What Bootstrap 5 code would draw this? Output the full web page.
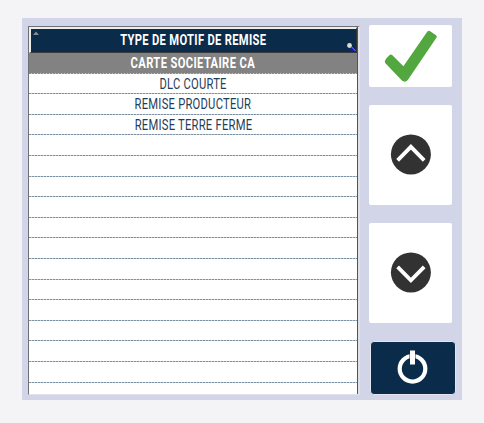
<!DOCTYPE html>
<html lang="fr">
<head>
<meta charset="utf-8">
<meta name="viewport" content="width=device-width, initial-scale=1">
<title>Type de motif de remise</title>
<link href="https://cdn.jsdelivr.net/npm/bootstrap@5.3.0/dist/css/bootstrap.min.css" rel="stylesheet">
<style>
body{background:#f4f4f6;font-family:Roboto,"Liberation Sans",sans-serif;font-size:14px;color:#1f3d59;height:423px;padding:18px 22px;overflow:hidden}
.panel{width:440px;height:382px;background:#d2d5e8;padding:8px 7px 5px 6px}
.motifs{width:332px;height:369px;background:#fff;border:1px solid #6f7073;border-right:2px solid #dfe1e6;border-bottom:1px solid #e1e2ea;margin-right:9px}
.grid-inner{height:100%;border-right:1px solid #3c5970}
.head{height:26px;background:#0a2c4a;color:#fff;border-top:2px solid #ededeb;border-left:2px solid #ededeb;border-bottom:1px solid #3b3b3b;border-right:1px solid #333}
.line{height:20.6px;background:repeating-linear-gradient(90deg,#7d93a5 0 2px,#bcc7d0 2px 3px) left bottom/100% 1px no-repeat;line-height:20px}
.line.chosen{background-color:#828282;color:#fff}
.narrow{display:inline-block;transform:scaleX(.8);white-space:nowrap;letter-spacing:.3px}
.fw-bold .narrow{letter-spacing:.38px}
.chosen .narrow{letter-spacing:.45px}
.sorter{left:1px;top:2px}
.finder{right:0;bottom:0}
.key{width:83px;background:#fff;border:0;border-radius:2px;padding:0}
.key-ok{height:62px;margin-bottom:18px;margin-top:-1px}
.key-move{height:100px;margin-bottom:18px}
.key-power{width:86px;height:54px;margin-left:1px;background:#0a2c4a;border:1px solid #e4e5ee;border-radius:4px}
</style>
<script src="https://cdn.jsdelivr.net/npm/bootstrap@5.3.0/dist/js/bootstrap.bundle.min.js"></script>
</head>
<body>
<main class="panel d-flex">
  <section class="motifs flex-shrink-0">
    <div class="grid-inner overflow-hidden text-center">
      <div class="head position-relative d-flex align-items-center justify-content-center fw-bold">
        <svg class="sorter position-absolute" width="8" height="5" viewBox="0 0 8 5"><path d="M1 4L4 .5L7 4Z" fill="#8a8a8a"/><path d="M0 4.5H7.5" stroke="#222"/></svg>
        <span class="narrow">TYPE DE MOTIF DE REMISE</span>
        <svg class="finder position-absolute" width="10" height="10" viewBox="0 0 10 10"><path d="M4.5 5L9 9.5" stroke="#1a12f0" stroke-width="1.8"/><path d="M5.3 4.6L9.5 8.8" stroke="#b9b9ee" stroke-width=".7"/><circle cx="3.5" cy="3.5" r="2.4" fill="#deded8"/></svg>
      </div>
      <div class="line chosen fw-bold"><span class="narrow">CARTE SOCIETAIRE CA</span></div>
      <div class="line"><span class="narrow">DLC COURTE</span></div>
      <div class="line"><span class="narrow">REMISE PRODUCTEUR</span></div>
      <div class="line"><span class="narrow">REMISE TERRE FERME</span></div>
      <div class="line"></div><div class="line"></div><div class="line"></div><div class="line"></div>
      <div class="line"></div><div class="line"></div><div class="line"></div><div class="line"></div>
      <div class="line"></div><div class="line"></div><div class="line"></div><div class="line"></div>
    </div>
  </section>
  <nav class="d-flex flex-column align-items-start">
    <button class="key key-ok d-flex" type="button" aria-label="Valider"><svg width="83" height="62" viewBox="0 0 83 62"><path d="M17.4 33.2L20.6 30.1Q22 29 23.4 30.2L34.4 41.2L58.4 6.6Q59.6 5.2 61.2 6.2L67 10.2Q68.4 11.4 67.4 12.8L38.8 55Q36 58 32.9 55.6L16.4 38.2Q15 36.6 16.4 35.1Z" fill="#53a73f"/></svg></button>
    <button class="key key-move d-flex" type="button" aria-label="Monter"><svg width="83" height="100" viewBox="0 0 83 100"><circle cx="41.9" cy="49.4" r="20" fill="#323232"/><path d="M28.6 55.4L41.9 41.8L55.2 55.4" fill="none" stroke="#fff" stroke-width="3.8"/></svg></button>
    <button class="key key-move d-flex" type="button" aria-label="Descendre"><svg width="83" height="100" viewBox="0 0 83 100"><circle cx="41.9" cy="49.4" r="20" fill="#323232"/><path d="M28.6 43.9L41.9 57.3L55.2 43.9" fill="none" stroke="#fff" stroke-width="3.8"/></svg></button>
    <button class="key key-power d-flex" type="button" aria-label="Quitter"><svg width="84" height="52" viewBox="0 0 84 52"><circle cx="41.5" cy="26.8" r="12.8" fill="none" stroke="#fff" stroke-width="4.2"/><path d="M38.8 11V22M44.2 11V22" stroke="#0a2c4a" stroke-width=".7"/><path d="M41.5 8.5V22.5" stroke="#fff" stroke-width="5"/></svg></button>
  </nav>
</main>
</body>
</html>
